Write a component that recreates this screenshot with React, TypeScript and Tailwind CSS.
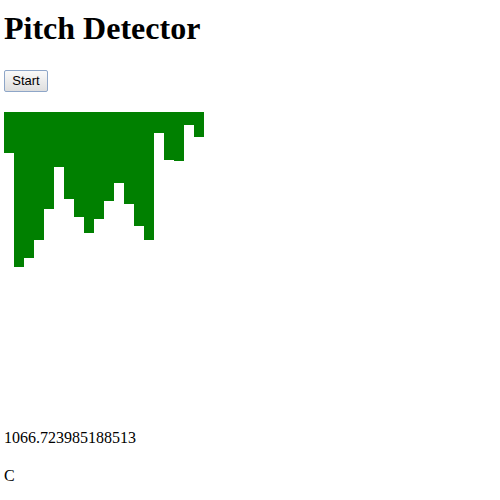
const bars = [41, 155, 146, 128, 97, 55, 87, 105, 121, 107, 89, 71, 92, 114, 128, 21, 48, 49, 13, 25];

export default function App() {
  return (
    <div className="min-h-[500px] bg-white pl-[4px] font-['Liberation_Serif',serif] text-black">
      <h1 className="mt-[10px] h-[37px] text-[32px] leading-[37px] font-bold">Pitch Detector</h1>
      {/* start button */}
      <button className="mt-[23px] block h-[22px] w-[44px] rounded-[2px] border border-[#8ea6c8] bg-gradient-to-b from-[#fafafa] to-[#dedede] font-['Liberation_Sans',sans-serif] text-[13px] leading-[20px] text-black">
        Start
      </button>
      {/* spectrum */}
      <div className="mt-[20px] flex h-[300px] w-[200px] items-start">
        {bars.map((h, i) => (
          <div key={i} className="w-[10px] bg-[#008000]" style={{ height: h }} />
        ))}
      </div>
      <p className="mt-[17px] text-[16px] leading-[18px]">1066.723985188513</p>
      <p className="mt-[20px] text-[16px] leading-[18px]">C</p>
    </div>
  );
}
